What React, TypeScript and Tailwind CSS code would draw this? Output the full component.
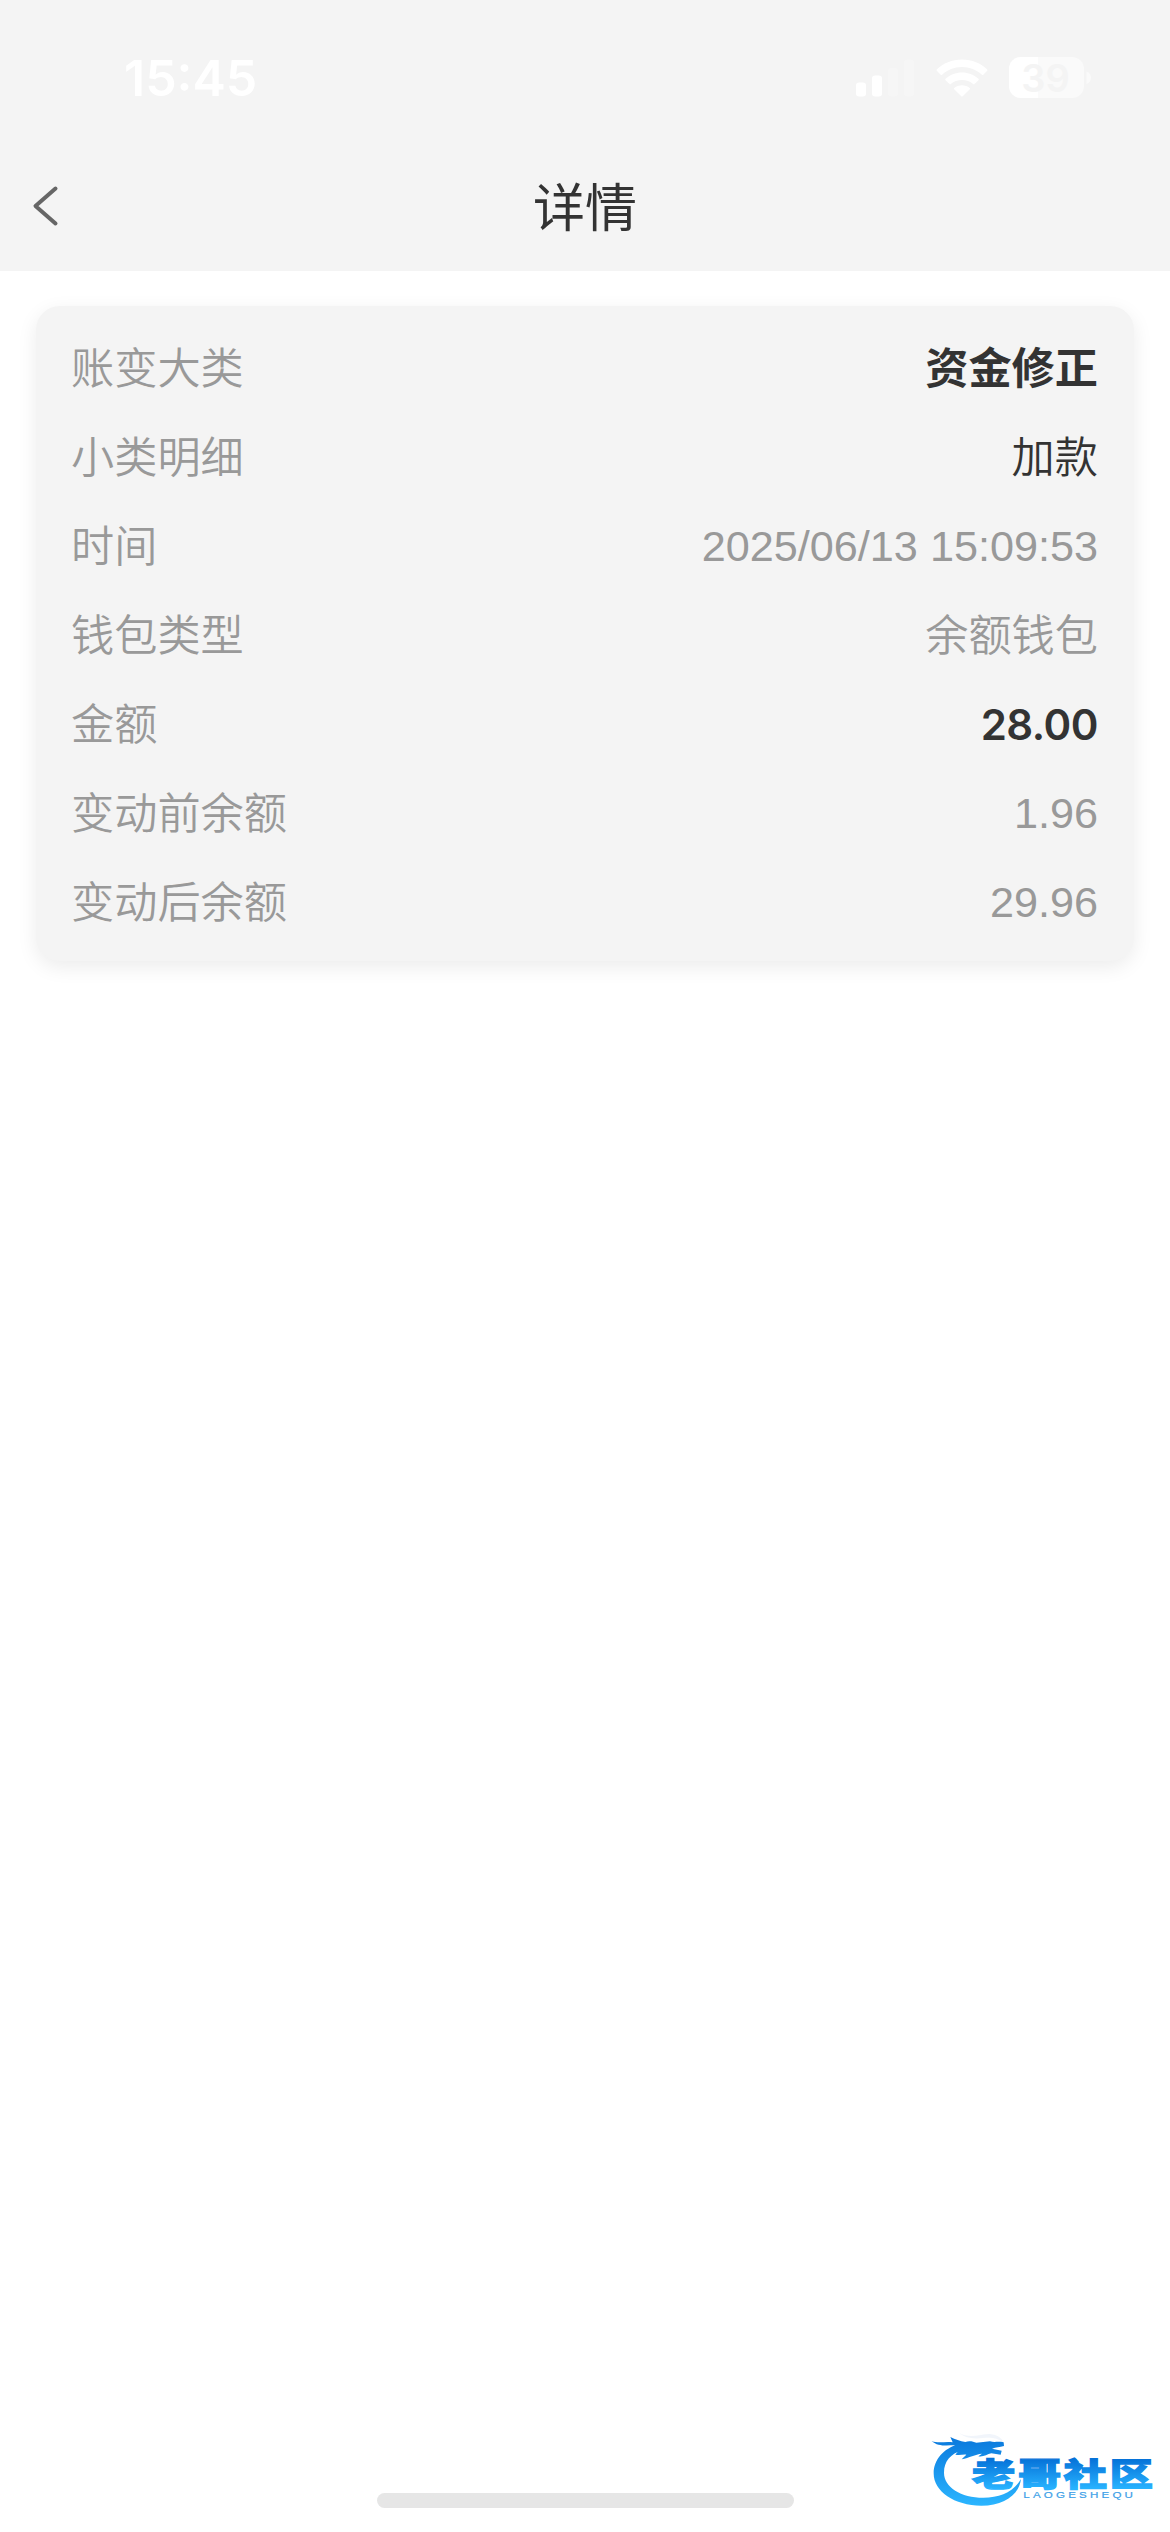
import clsx from 'clsx'

interface DetailRow {
  label: string
  value: string
  className?: string
}

const rows: DetailRow[] = [
  { label: '账变大类', value: '资金修正', className: 'pt-1 font-bold text-[#333333]' },
  { label: '小类明细', value: '加款', className: 'pt-1 font-[350] text-[#333333]' },
  { label: '时间', value: '2025/06/13 15:09:53', className: 'pt-0.5' },
  { label: '钱包类型', value: '余额钱包', className: 'pt-1 font-[350]' },
  {
    label: '金额',
    value: '28.00',
    className: "pt-0.5 font-[Inter,'Liberation_Sans',sans-serif] text-[42px] font-semibold tracking-[-0.5px] text-[#333333]",
  },
  { label: '变动前余额', value: '1.96', className: 'pt-0.5' },
  { label: '变动后余额', value: '29.96', className: 'pt-0.5' },
]

function SignalIcon() {
  return (
    <svg width="58" height="38" viewBox="0 0 58 38" fill="#ffffff">
      <rect x="0" y="23.5" width="10" height="14" rx="3" />
      <rect x="16" y="16.5" width="10" height="21" rx="3" />
      <rect x="32" y="9" width="10" height="28.5" rx="3" fillOpacity="0.2" />
      <rect x="48" y="0.5" width="10" height="37" rx="3" fillOpacity="0.2" />
    </svg>
  )
}

function WifiIcon() {
  return (
    <svg width="52" height="38" viewBox="0 0 52 38" fill="#ffffff">
      <path d="M26 0.5C36 0.5 44.8 4.3 51.2 10.4Q51.9 11.1 51.2 11.8L47.3 15.7Q46.6 16.4 45.9 15.7C40.7 11 33.7 8.1 26 8.1C18.3 8.1 11.3 11 6.1 15.7Q5.4 16.4 4.7 15.7L0.8 11.8Q0.1 11.1 0.8 10.4C7.2 4.3 16 0.5 26 0.5Z" />
      <path d="M26 13.5C32.4 13.5 38.2 15.9 42.5 19.8Q43.2 20.5 42.5 21.2L38.5 25.1Q37.9 25.7 37.2 25.1C34.2 22.5 30.3 21 26 21C21.7 21 17.8 22.5 14.8 25.1Q14.1 25.7 13.5 25.1L9.5 21.2Q8.8 20.5 9.5 19.8C13.8 15.9 19.6 13.5 26 13.5Z" />
      <path d="M26 26.2C28.9 26.2 31.6 27.2 33.7 28.9Q34.5 29.6 33.8 30.3L26.7 37.2Q26 37.9 25.3 37.2L18.2 30.3Q17.5 29.6 18.3 28.9C20.4 27.2 23.1 26.2 26 26.2Z" />
    </svg>
  )
}

function BatteryIcon() {
  return (
    <svg width="82" height="61" viewBox="0 -10 82 61">
      <path d="M12 0H63A12 12 0 0 1 75 12V29A12 12 0 0 1 63 41H12A12 12 0 0 1 0 29V12A12 12 0 0 1 12 0Z" fill="#fafafa" />
      <path d="M12 0H29V41H12A12 12 0 0 1 0 29V12A12 12 0 0 1 12 0Z" fill="#ffffff" />
      <path d="M77.5 14.5C80.3 15.6 82 18 82 20.7C82 23.4 80.3 25.8 77.5 27Z" fill="#fafafa" />
      <text x="36.5" y="34.5" textAnchor="middle" fontFamily="Inter, sans-serif" fontSize="38" fontWeight="600" fill="#f4f4f4">
        39
      </text>
    </svg>
  )
}

function CommunityLogo() {
  return (
    <svg className="absolute right-0 bottom-0 h-[122px] w-[270px]" viewBox="0 0 810 366">
      <defs>
        <linearGradient id="ring" gradientUnits="userSpaceOnUse" x1="0" y1="80" x2="0" y2="285">
          <stop offset="0" stopColor="#0a78dc" />
          <stop offset="1" stopColor="#2bb5ff" />
        </linearGradient>
        <linearGradient id="word" gradientUnits="userSpaceOnUse" x1="0" y1="-80" x2="0" y2="8">
          <stop offset="0" stopColor="#0672d8" />
          <stop offset="1" stopColor="#27b2ff" />
        </linearGradient>
      </defs>
      {/* Dragon body */}
      <path
        d="M176 102C130 116 101 149 101 190C101 245 163 287 244 287C312 287 358 253 363 207C342 244 301 263 250 263C183 263 132 232 132 188C132 155 151 131 188 121Z"
        fill="url(#ring)"
      />
      {/* Dragon head, whiskers and mane */}
      <path
        d="M95 93C114 101 135 94 158 97L151 81C166 88 180 94 196 96C207 91 219 94 229 98L270 94C284 98 295 93 311 97L312 108C299 111 288 112 276 116L305 122L302 134L274 130C261 133 250 142 235 139L246 131C225 133 208 143 185 148L199 134C187 133 179 137 166 134L178 119L153 121L165 106C142 106 114 111 95 93Z"
        fill="url(#ring)"
      />
      <path d="M178 69C208 87 242 72 270 72C292 74 308 85 310 98C293 84 274 82 249 84C223 87 196 85 178 69Z" fill="#dbe7f4" fillOpacity="0.4" />
      <text
        transform="translate(216 227) scale(1.35 1)"
        fontFamily="'Noto Sans CJK SC', sans-serif"
        fontSize="96"
        fontWeight="900"
        textLength="402"
        fill="url(#word)"
        stroke="url(#word)"
        strokeWidth="4"
      >
        老哥社区
      </text>
      <text
        transform="translate(370 265) scale(1.2 1)"
        fontFamily="'Liberation Sans', sans-serif"
        fontSize="29"
        textLength="274"
        fill="#3c9fe8"
        stroke="#3c9fe8"
        strokeWidth="0.6"
      >
        LAOGESHEQU
      </text>
    </svg>
  )
}

export default function App() {
  return (
    <div className="relative flex h-[2532px] w-[1170px] flex-col bg-white font-['Liberation_Sans','Noto_Sans_CJK_SC',sans-serif]">
      <header className="h-[271px] bg-[#f4f4f4]">
        {/* Status bar */}
        <div className="flex h-[141px] items-center justify-between pt-[14px] pr-[79px] pl-[124px]">
          <span className="font-[Inter,sans-serif] text-[50px] leading-none font-semibold text-white">15:45</span>
          <div className="flex items-center">
            <SignalIcon />
            <div className="ml-[22px]">
              <WifiIcon />
            </div>
            <div className="ml-[21px]">
              <BatteryIcon />
            </div>
          </div>
        </div>

        {/* Nav bar */}
        <div className="grid h-[130px] grid-cols-[200px_1fr_200px] items-center">
          <button className="pl-8" aria-label="返回">
            <svg width="28" height="42" viewBox="0 0 28 42" fill="none" stroke="#666666" strokeWidth="4" strokeLinecap="round" strokeLinejoin="round">
              <path d="M23.5 3.5L3.5 21L23.5 38.5" />
            </svg>
          </button>
          <h1 className="pt-1.5 text-center text-[52px] leading-none text-[#333333]">详情</h1>
        </div>
      </header>

      <main className="px-9 pt-[35px]">
        <div className="h-[655px] rounded-[24px] bg-[#f4f4f4] pt-[17px] pr-9 pl-[35px] shadow-[0_6px_20px_rgba(0,0,0,0.08)]">
          {rows.map(({ label, value, className }) => (
            <div key={label} className="flex h-[89px] items-center justify-between text-[43.2px] leading-none text-[#999999]">
              <span className="pt-1 font-[350]">{label}</span>
              <span className={clsx(className)}>{value}</span>
            </div>
          ))}
        </div>
      </main>

      <div className="mx-auto mt-auto mb-6 h-[15px] w-[417px] rounded-full bg-[#e6e6e6]" />
      <CommunityLogo />
    </div>
  )
}
